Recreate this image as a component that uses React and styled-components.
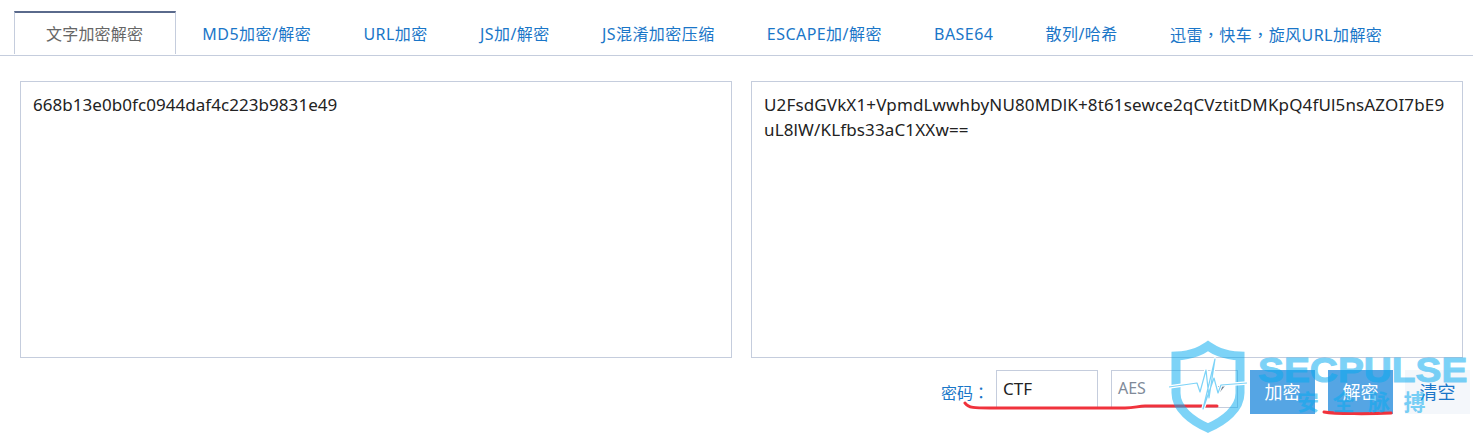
import React from 'react';
import styled, {createGlobalStyle} from 'styled-components';

const GlobalStyle = createGlobalStyle`
  html, body {
    margin: 0;
    padding: 0;
    background: #fff;
    overflow: hidden;
  }
`

const fontStack = `"Noto Sans", "Noto Sans CJK SC", sans-serif`;

const Page = styled.div`
  position: relative;
  width: 1473px;
  height: 433px;
  overflow: hidden;
  background: #fff;
  font-family: ${fontStack};
`

const TabBar = styled.ul`
  display: flex;
  margin: 0;
  padding: 11px 0 0 14px;
  height: 56px;
  box-sizing: border-box;
  list-style: none;
  border-bottom: 1px solid #c5cddd;
`

const Tab = styled.li`
  box-sizing: border-box;
  height: 43px;
  line-height: 42px;
  padding: ${props => (props.$active ? '0 32px 0 31px' : '0 26.1px')};
  font-size: 16px;
  letter-spacing: ${props => (props.$active ? '0.2px' : '0.45px')};
  white-space: nowrap;
  color: ${props => (props.$active ? '#666' : '#1a76c8')};
  border-top: 2px solid ${props => (props.$active ? '#5a6a8c' : 'transparent')};
  border-left: ${props => (props.$active ? '1px solid #c5cddd' : 'none')};
  border-right: ${props => (props.$active ? '1px solid #c5cddd' : 'none')};
`

// 全角标点在原图里是居中的，TC 字形才是这样
const Punct = styled.span`
  font-family: "Noto Sans CJK TC", sans-serif;
`

const Panels = styled.div`
  display: flex;
  gap: 19px;
  padding: 25px 10px 0 20px;
`

const TextBox = styled.textarea`
  box-sizing: border-box;
  flex: 1 0 0;
  min-width: 0;
  height: 277px;
  margin: 0;
  padding: 10px 12px;
  border: 1px solid #c5cddd;
  border-radius: 0;
  outline: none;
  resize: none;
  overflow: hidden;
  font-family: ${fontStack};
  font-size: 17px;
  line-height: 25px;
  letter-spacing: ${props => props.$tracking}px;
  color: #222;
  word-break: break-all;
`

const ActionRow = styled.div`
  display: flex;
  justify-content: flex-end;
  align-items: flex-start;
  padding: 12px 3px 0 0;
`

const Label = styled.label`
  margin: 10px 7px 0 0;
  font-size: 16px;
  line-height: 24px;
  color: #1a76c8;
`

const PasswordInput = styled.input`
  box-sizing: border-box;
  width: 102px;
  height: 38px;
  margin: 0 13px 0 0;
  padding: 0 6px 2px;
  border: 1px solid #c5cddd;
  border-radius: 0;
  outline: none;
  font-family: ${fontStack};
  font-size: 17px;
  color: #222;
`

const SelectBox = styled.div`
  position: relative;
  box-sizing: border-box;
  width: 127px;
  height: 38px;
  margin-right: 12px;
  padding-left: 6px;
  line-height: 35px;
  font-size: 16px;
  color: #808a99;
  border: 1px solid #c5cddd;
`

const Caret = styled.span`
  position: absolute;
  right: 12px;
  top: 15px;
  width: 0;
  height: 0;
  border-left: 5px solid transparent;
  border-right: 5px solid transparent;
  border-top: 6px solid #6f7f8f;
`

const ActionButton = styled.button`
  box-sizing: border-box;
  width: 65px;
  height: 44px;
  margin-right: ${props => props.$gap}px;
  padding: 0 0 2px;
  border: none;
  border-radius: 0;
  font-family: ${fontStack};
  font-size: 18px;
  color: ${props => (props.$plain ? '#1a76c8' : '#fff')};
  background: ${props => (props.$plain ? '#f4f7fb' : '#55a5e4')};
`

const Markup = styled.svg`
  position: absolute;
  left: 0;
  top: 0;
  pointer-events: none;
`

const Watermark = styled.svg`
  position: absolute;
  left: 1168px;
  top: 339px;
  pointer-events: none;
`

const WatermarkTitle = styled.div`
  position: absolute;
  left: 1258px;
  top: 351px;
  font-family: "Liberation Sans", Arial, sans-serif;
  font-weight: 700;
  font-size: 35px;
  line-height: 38px;
  transform: scaleX(1.11);
  transform-origin: left center;
  -webkit-text-stroke: 1px #05aaf0;
  color: #05aaf0;
  opacity: 0.52;
  white-space: nowrap;
  pointer-events: none;
`

const WatermarkSub = styled.div`
  position: absolute;
  left: 1297px;
  top: 386px;
  font-family: "Noto Sans CJK SC", sans-serif;
  font-weight: 700;
  font-size: 22px;
  line-height: 28px;
  letter-spacing: 13.5px;
  color: #05aaf0;
  opacity: 0.52;
  white-space: nowrap;
  pointer-events: none;
`

const tabs = ['文字加密解密', 'MD5加密/解密', 'URL加密', 'JS加/解密', 'JS混淆加密压缩', 'ESCAPE加/解密', 'BASE64', '散列/哈希', '迅雷，快车，旋风URL加解密'];

const withPunct = text =>
  text.split(/([，：])/).map((part, i) => (i % 2 ? <Punct key={i}>{part}</Punct> : part));

const App = () => {
  return (
    <Page>
      <GlobalStyle />
      <TabBar>
        {tabs.map((name, i) => (
          <Tab key={name} $active={i === 0}>{withPunct(name)}</Tab>
        ))}
      </TabBar>
      <Panels>
        <TextBox $tracking={0.05} readOnly defaultValue="668b13e0b0fc0944daf4c223b9831e49" />
        <TextBox $tracking={0.14} readOnly defaultValue="U2FsdGVkX1+VpmdLwwhbyNU80MDlK+8t61sewce2qCVztitDMKpQ4fUl5nsAZOI7bE9uL8lW/KLfbs33aC1XXw==" />
      </Panels>
      <ActionRow>
        <Label>{withPunct('密码：')}</Label>
        <PasswordInput readOnly defaultValue="CTF" />
        <SelectBox>AES<Caret /></SelectBox>
        <ActionButton $gap={13}>加密</ActionButton>
        <ActionButton $gap={12}>解密</ActionButton>
        <ActionButton $plain $gap={0}>清空</ActionButton>
      </ActionRow>
      <Markup width="1473" height="433" viewBox="0 0 1473 433" fill="none">
        <path d="M965 403 C968 408 975 408 990 408 L1125 408 C1135 408 1138 406 1145 406 L1217 406" stroke="#f0323c" strokeWidth="3" strokeLinecap="round" />
        <path d="M1324 412 C1335 414 1370 414 1391 413" stroke="#f0323c" strokeWidth="3" strokeLinecap="round" />
      </Markup>
      <Watermark width="82" height="94" viewBox="0 0 82 94" fill="none">
        <path d="M40 7 C46 11 54 16 72 17 L72 54 C72 70 56 82 40 89 C24 82 8 70 8 54 L8 17 C26 16 34 11 40 7 Z" stroke="#05aaf0" strokeOpacity="0.52" strokeWidth="9" />
        <path d="M1 48 L29 44 L32 53 L38 31 L41 59 L47 20 L35 70 L46 39 L50 54 L53 46 L79 44" stroke="#fff" strokeWidth="3.5" strokeLinejoin="round" />
        <path d="M1 48 L29 44 L32 53 L38 31 L41 59 L47 20 L35 70 L46 39 L50 54 L53 46 L79 44" stroke="#7dd3f7" strokeWidth="1.2" strokeLinejoin="round" />
      </Watermark>
      <WatermarkTitle>SECPULSE</WatermarkTitle>
      <WatermarkSub>安全脉搏</WatermarkSub>
    </Page>
  );
};

export default App;
